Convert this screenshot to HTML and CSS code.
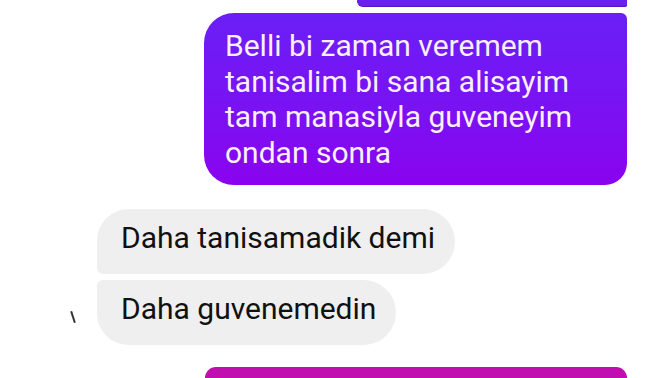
FILE: index.html
```html
<!DOCTYPE html>
<html>
<head>
<meta charset="utf-8">
<link rel="stylesheet" href="styles.css">
</head>
<body>
<div class="chat">
  <div class="bubble out top-cut"></div>
  <div class="bubble out main">Belli bi zaman veremem<br>tanisalim bi sana alisayim<br>tam manasiyla guveneyim<br>ondan sonra</div>
  <div class="in-group">
    <span class="mark"></span>
    <div class="bubble in first">Daha tanisamadik demi</div>
    <div class="bubble in last">Daha guvenemedin</div>
  </div>
  <div class="bubble out bottom-cut"></div>
</div>
</body>
</html>
```
FILE: styles.css
```css
html, body {
  margin: 0;
  padding: 0;
  background: #ffffff;
  width: 672px;
  height: 378px;
  overflow: hidden;
}
.chat {
  display: flex;
  flex-direction: column;
  padding: 0 45px 0 97px;
  font-family: Roboto, "Noto Sans", sans-serif;
}
.bubble {
  box-sizing: border-box;
}
.out {
  align-self: flex-end;
}
.top-cut {
  width: 270px;
  height: 6px;
  background: #6a1ff0;
  border-radius: 0 0 6px 22px;
  box-shadow: 0 1px 0 #5514c8;
}
.main {
  margin-top: 7px;
  width: 423px;
  height: 172px;
  padding: 15px 8px 0 21px;
  background: linear-gradient(180deg, #6a1ff5 0%, #7a12f3 55%, #8a03ef 100%);
  color: #faeefa;
  font-size: 30px;
  line-height: 35.7px;
  border-radius: 30px 6px 22px 30px;
}
.in-group {
  position: relative;
  display: flex;
  flex-direction: column;
  align-items: flex-start;
  gap: 6px;
  margin-top: 24px;
}
.in {
  background: #efefef;
  color: #111111;
  font-size: 30px;
  height: 65px;
  line-height: 57px;
  padding: 0 20px 8px 24px;
}
.first {
  border-radius: 32px 33px 33px 6px;
}
.last {
  border-radius: 6px 33px 33px 32px;
}
.mark {
  position: absolute;
  left: -25px;
  top: 102px;
  width: 2px;
  height: 12px;
  background: #333;
  transform: rotate(-18deg);
}
.bottom-cut {
  margin-top: 22px;
  width: 422px;
  height: 11px;
  background: #c00eb0;
  border-radius: 26px 26px 0 0;
}
```
